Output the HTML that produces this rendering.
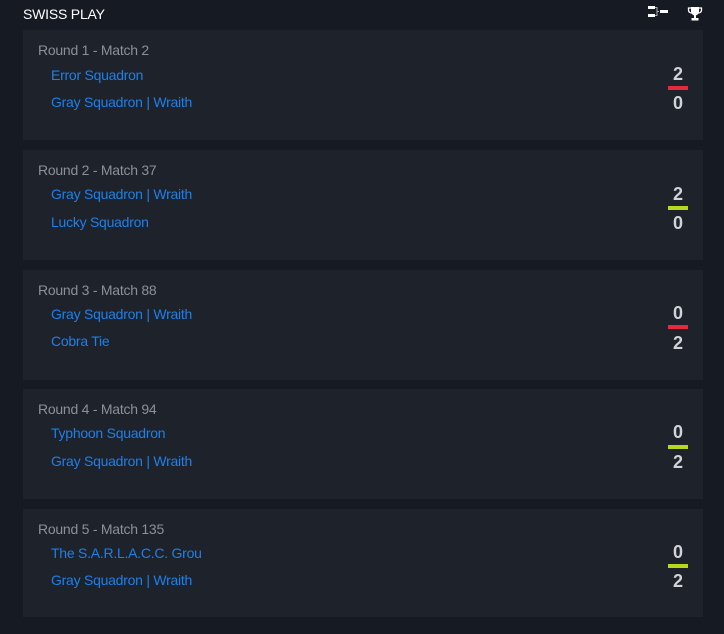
<!DOCTYPE html>
<html><head><style>
body{margin:0;width:724px;height:634px;background:#161a23;font-family:"Liberation Sans",sans-serif;overflow:hidden;position:relative}
.title{position:absolute;left:23px;top:6px;color:#fff;font-size:14px;letter-spacing:-0.2px}
.card{position:absolute;left:23px;width:680px;height:110px;background:#1d222b}
.r{position:absolute;left:15px;top:12px;color:#8c9097;font-size:14px;letter-spacing:-0.25px}
.t{position:absolute;left:28px;color:#1e80ea;font-size:14px;width:151px;white-space:nowrap;overflow:hidden;letter-spacing:-0.25px}
.s{position:absolute;left:640px;width:30px;text-align:center;color:#d0d3d8;font-size:18px;font-weight:bold}
.b{position:absolute;left:645px;top:56px;width:20px;height:4px}
</style></head><body>
<div class="title">SWISS PLAY</div>
<svg style="position:absolute;left:648px;top:5px" width="21" height="14" viewBox="0 0 21 14"><rect x="0" y="1" width="7" height="3" fill="#fff"/><rect x="0" y="9" width="7" height="3" fill="#fff"/><path d="M7 2.5H9V10.5H7M9 6.5H11" stroke="#aaa" fill="none"/><rect x="12" y="5" width="8" height="3" fill="#fff"/></svg>
<svg style="position:absolute;left:687px;top:6px" width="16" height="16" viewBox="0 0 16 16"><path d="M4 1H12V5C12 8 10 9.5 8 9.5C6 9.5 4 8 4 5Z" fill="#fff"/><path d="M4 2H1.5V4C1.5 6 3 7 5 7M12 2H14.5V4C14.5 6 13 7 11 7" stroke="#fff" fill="none" stroke-width="1.3"/><rect x="7" y="9" width="2" height="3" fill="#fff"/><rect x="4.5" y="12" width="7" height="2.5" fill="#fff"/></svg>

<div class="card" style="top:30px"><div class="r">Round 1 - Match 2</div><div class="t" style="top:37px">Error Squadron</div><div class="t" style="top:64px">Gray Squadron | Wraith</div><div class="s" style="top:34px">2</div><div class="b" style="background:#e8283f"></div><div class="s" style="top:63px">0</div></div>
<div class="card" style="top:150px"><div class="r">Round 2 - Match 37</div><div class="t" style="top:36px">Gray Squadron | Wraith</div><div class="t" style="top:64px">Lucky Squadron</div><div class="s" style="top:34px">2</div><div class="b" style="background:#b8d81e"></div><div class="s" style="top:63px">0</div></div>
<div class="card" style="top:270px"><div class="r">Round 3 - Match 88</div><div class="t" style="top:36px">Gray Squadron | Wraith</div><div class="t" style="top:63px">Cobra Tie</div><div class="s" style="top:33px">0</div><div class="b" style="background:#e8283f;top:55px"></div><div class="s" style="top:63px">2</div></div>
<div class="card" style="top:389px"><div class="r">Round 4 - Match 94</div><div class="t" style="top:36px">Typhoon Squadron</div><div class="t" style="top:64px">Gray Squadron | Wraith</div><div class="s" style="top:33px">0</div><div class="b" style="background:#b8d81e"></div><div class="s" style="top:63px">2</div></div>
<div class="card" style="top:509px;height:108px"><div class="r">Round 5 - Match 135</div><div class="t" style="top:36px">The S.A.R.L.A.C.C. Group</div><div class="t" style="top:63px">Gray Squadron | Wraith</div><div class="s" style="top:33px">0</div><div class="b" style="background:#b8d81e;top:55px"></div><div class="s" style="top:62px">2</div></div>
</body></html>
